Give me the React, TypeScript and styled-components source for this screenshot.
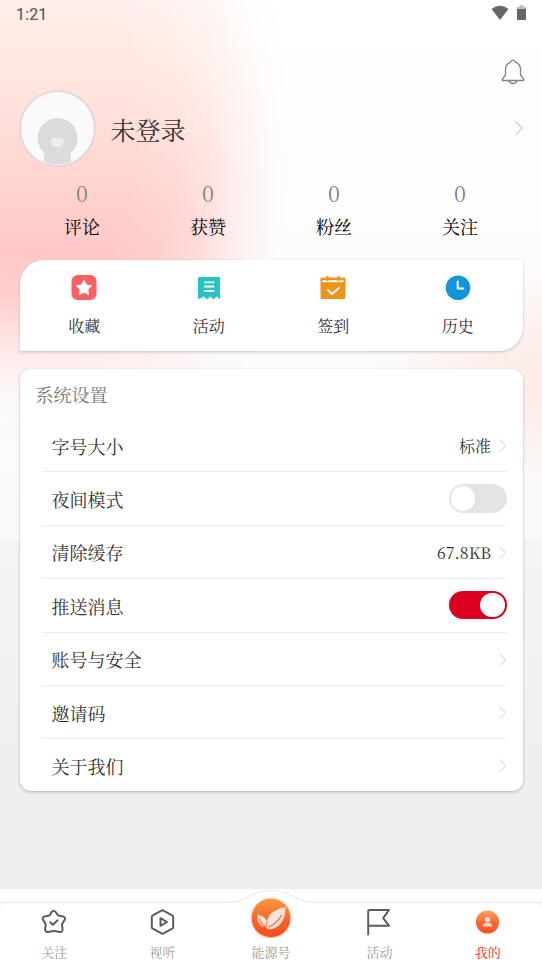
import React from 'react';
import styled, { createGlobalStyle } from 'styled-components';

const Global = createGlobalStyle`
  * { box-sizing: border-box; }
  body {
    margin: 0;
    font-family: "Noto Serif CJK SC", "Source Han Serif SC", "Liberation Serif", "Noto Sans CJK SC", serif;
    color: #333;
  }
  svg { display: block; flex: none; }
`;

const Screen = styled.div`
  position: relative;
  isolation: isolate;
  width: 542px;
  height: 963px;
  display: flex;
  flex-direction: column;
  overflow: hidden;
  background: linear-gradient(#f4f4f4 541px, #ededed 860px);
`;

const Backdrop = styled.div`
  position: absolute;
  z-index: -1;
  inset: 0 0 auto 0;
  height: 541px;
  background:
    radial-gradient(ellipse 190px 115px at 555px 378px, #fdebe6 0%, #fdebe6cc 35%, #fdece744 75%, #fdece700 100%),
    linear-gradient(#ffffff, #fcfcfc 280px, #fafafa);
`;

const Glow = styled.div`
  height: 440px;
  background: linear-gradient(
    #ffeeec 0, #ffebe4 45px, #ffe3dd 95px, #ffdad5 150px, #ffd0cc 205px, #ffc8c6 255px,
    #ffcfcd 295px, #ffdfdd 330px, #feecec 360px, #fcf8f8 400px, #fbfbfb00 440px
  );
  mask-image:
    radial-gradient(ellipse 310px 470px at -20px 130px, #000 0%, #000 50%, #000d 64%, #000a 74%, #0005 84%, #0002 92%, transparent 100%);
`;

const StatusBar = styled.header`
  height: 28px;
  padding: 0 16px;
  display: flex;
  align-items: center;
  justify-content: space-between;
  font: 400 16px Roboto, sans-serif;
  color: #5f5857;
  letter-spacing: 0.15px;
  -webkit-text-stroke: 0.2px;
`;

const StatusIcons = styled.div`
  display: flex;
  gap: 8px;
  margin-top: -2px;
`;

const BellRow = styled.div`
  height: 62px;
  padding: 31px 17px 0 0;
  display: flex;
  justify-content: flex-end;
`;

const Profile = styled.section`
  height: 77px;
  padding: 0 19.5px 0 19px;
  display: flex;
  align-items: center;
`;

const UserName = styled.h1`
  flex: 1;
  margin: 1px 0 0 14.5px;
  font-size: 25px;
  font-weight: 400;
  line-height: 36px;
`;

const Stats = styled.section`
  height: 93px;
  padding: 12px 19px 0 19px;
  display: grid;
  grid-template-columns: repeat(4, 1fr);
`;

const Stat = styled.div`
  display: flex;
  flex-direction: column;
  align-items: center;
  color: #000;
  font-size: 18px;
  line-height: 32px;
`;

const Count = styled.span`
  height: 28px;
  line-height: 28px;
  font-size: 22px;
  font-weight: 300;
  color: #817978;
  margin-bottom: 3px;
`;

const Shortcuts = styled.nav`
  height: 91px;
  margin: 0 19.5px 18px 19.5px;
  padding: 14px 2.5px 0 2.5px;
  display: grid;
  grid-template-columns: repeat(4, 1fr);
  background: #fff;
  border-radius: 24px 0 24px 0;
  box-shadow: 0 1px 3px #0003;
`;

const Shortcut = styled.div`
  display: flex;
  flex-direction: column;
  align-items: center;
  gap: 12px;
  font-size: 16px;
  line-height: 25px;
`;

const Settings = styled.section`
  height: 422px;
  margin: 0 19.5px;
  padding: 0 16px 0 22.5px;
  background: #fff;
  border-radius: 11px;
  box-shadow: 0 1px 3px #0004;
`;

const SettingsTitle = styled.h2`
  height: 50px;
  margin: 0 0 0 -6.5px;
  font-size: 18px;
  font-weight: 400;
  line-height: 51px;
  color: #777;
`;

const Row = styled.div`
  height: 53.4px;
  padding: 1px 0 0 9.5px;
  display: flex;
  align-items: center;
  justify-content: space-between;
  font-size: 18px;
  border-bottom: 1.5px solid #ebebeb;
  &:last-child { border-bottom-color: transparent; }
`;

const Value = styled.span`
  display: flex;
  align-items: center;
  gap: 8px;
  font-size: 16px;
`;

const Toggle = styled.span<{ $on?: boolean }>`
  width: 58px;
  height: 28.5px;
  margin-top: -1.5px;
  padding: 2px;
  display: flex;
  align-items: center;
  justify-content: ${p => (p.$on ? 'flex-end' : 'flex-start')};
  border-radius: 15px;
  background: ${p => (p.$on ? '#db001d' : '#e4e4e4')};
  &::after {
    content: '';
    width: 24.5px;
    height: 24.5px;
    border-radius: 50%;
    background: #fff;
  }
`;

const TabBar = styled.nav`
  position: relative;
  height: 74px;
  margin-top: auto;
  display: grid;
  grid-template-columns: repeat(5, 1fr);
  background: #fff;
`;

const TabEdge = styled.svg`
  position: absolute;
  inset: 0 auto auto 0;
`;

const Tab = styled.div<{ $active?: boolean }>`
  position: relative;
  display: flex;
  flex-direction: column;
  align-items: center;
  font-size: 13px;
  line-height: 19px;
  color: ${p => (p.$active ? '#e51d1d' : '#9b9b9b')};
`;

const TabIcon = styled.div`
  height: 53px;
  padding-top: 13px;
  display: flex;
  align-items: center;
`;

const CenterIcon = styled(TabIcon)`
  padding-top: 4px;
`;

const Chevron = ({ size = 13.5, color = '#c4c4c4' }: { size?: number; color?: string }) => (
  <svg width={size * 0.55} height={size} viewBox="0 0 7.2 13" fill="none" stroke={color} strokeWidth=".8">
    <path d="M.5.5 6.600 6.500.5 12.500" />
  </svg>
);

const Avatar = () => (
  <svg width="77" height="77" viewBox="0 0 77 77">
    <defs><clipPath id="face"><circle cx="38.5" cy="38.5" r="36" /></clipPath></defs>
    <circle cx="38.5" cy="38.5" r="36.5" fill="#fafafa" />
    <circle cx="38.5" cy="38.5" r="37.4" fill="none" stroke="#ddd8d6" strokeWidth="1.5" />
    <g clipPath="url(#face)" fill="#dbdbdb">
      <circle cx="38.5" cy="48" r="20" />
      <path d="M27 62h23l2 4v11H25V66z" />
      <path d="M32 51q0-3 3-3h7q3 0 3 3-1 6-6.500 6T32 51" fill="#ededed" />
    </g>
  </svg>
);

const StarIcon = () => (
  <svg width="26" height="27" viewBox="0 0 26 27">
    <rect x=".5" y="1" width="25" height="25" rx="6" fill="#f96062" />
    <path d="m13 6.200 2.400 4.800 5.200.8-3.800 3.700.9 5.200-4.700-2.500-4.700 2.500.9-5.200-3.800-3.700 5.200-.8z" fill="#fff" stroke="#fff" strokeWidth="1" strokeLinejoin="round" />
  </svg>
);

const ReceiptIcon = () => (
  <svg width="24" height="27" viewBox="0 0 24 27">
    <path d="M2 3h20q1 0 1 1v21q-1.500 0-2.200-2-1-1-2 0-.8 2-2.300 2t-2.300-2q-1-1-2 0-.8 2-2.300 2t-2.300-2q-1-1-2 0Q2.500 25.500 1 25V4q0-1 1-1" fill="#27c3c2" />
    <path d="M8 8.300h8.500M8 12.500h8.500M8 17h8.500" stroke="#fff" strokeWidth="1.800" strokeLinecap="round" />
  </svg>
);

const CalendarIcon = () => (
  <svg width="26" height="27" viewBox="0 0 26 27">
    <rect x=".5" y="3.500" width="25" height="21.500" rx="1.300" fill="#eb961a" />
    <path d="M2.500 6.200h21v2h-21z" fill="#fff" />
    <path d="M7.500 2v5M18.500 2v5" stroke="#eb961a" strokeWidth="2.200" />
    <path d="m8 16 4 4 7-6" fill="none" stroke="#fff" strokeWidth="1.800" strokeLinecap="round" strokeLinejoin="round" />
  </svg>
);

const ClockIcon = () => (
  <svg width="26" height="27" viewBox="0 0 26 27">
    <circle cx="13" cy="13.700" r="12.300" fill="#1296db" />
    <path d="M12.700 7.500v7.100h5.500" fill="none" stroke="#fff" strokeWidth="2" strokeLinecap="round" strokeLinejoin="round" />
  </svg>
);

const LeafLogo = () => (
  <svg width="44" height="44" viewBox="0 0 44 44">
    <defs>
      <linearGradient id="leafBg" x1="0" y1="0" x2="0" y2="1">
        <stop stopColor="#fb973c" /><stop offset=".6" stopColor="#f9612a" /><stop offset="1" stopColor="#fa4d1d" />
      </linearGradient>
    </defs>
    <circle cx="22" cy="22" r="20.500" fill="#ffc8af" opacity=".7" />
    <circle cx="22" cy="22" r="19.300" fill="url(#leafBg)" />
    <path d="M8.500 18.500q6.500 1.500 9.300 6-.2 3.500-1.300 6.800Q7.500 30 8.500 18.500" fill="#fde2db" />
    <path d="M36.500 11Q18.500 15 18.400 25.500q.2 3.500-1.600 6 2 1.800 5 1.700Q36.500 30 36.500 11" fill="#fde2db" />
    <path d="M20 31Q29 26.500 32.500 19M10.500 23q2 6 6.500 8" fill="none" stroke="#f76532" strokeWidth="1.100" strokeLinecap="round" />
  </svg>
);

const MineIcon = () => (
  <svg width="26" height="26" viewBox="0 0 26 26">
    <defs>
      <linearGradient id="mineBg" x1="0" y1="0" x2="0" y2="1">
        <stop stopColor="#fda267" /><stop offset=".55" stopColor="#f96530" /><stop offset="1" stopColor="#fb4f1c" />
      </linearGradient>
    </defs>
    <circle cx="12.500" cy="13" r="11.600" fill="url(#mineBg)" />
    <circle cx="12.500" cy="10.600" r="2.600" fill="#fde1d9" />
    <path d="M8.100 17.500v-1.200q0-2.300 2.500-2.300h3.800q2.500 0 2.500 2.300v1.200z" fill="#fde1d9" />
  </svg>
);

const lineIcon = { fill: 'none', stroke: '#5c5c5c', strokeWidth: 2, strokeLinejoin: 'round', strokeLinecap: 'round' } as const;

const FollowIcon = () => (
  <svg width="26" height="26" viewBox="0 0 26 26" {...lineIcon}>
    <path d="M10.700 2.800q1.900-2.300 3.800 0l2 3q.4.600 1.100.7l4.500.9q2.800 1 1.600 3.400l-2.400 3.800q-.4.600-.3 1.200l.6 4.400q-.1 3.100-3 2.900l-5-1.100q-.8-.2-1.600 0l-5 1.100q-2.600.2-2.900-2.900l.6-4.400q.1-.6-.3-1.200L2 10.800Q.9 8.400 3.600 7.400l4.500-.9q.7-.1 1.100-.7z" />
    <path d="m9.300 13.200 2.600 2.600 4.700-4.600" />
  </svg>
);

const VideoIcon = () => (
  <svg width="26" height="26" viewBox="0 0 26 26" {...lineIcon}>
    <path d="M11.500 1.600q1-.6 2 0l8.700 4.700q1 .6 1 1.700v10q0 1.100-1 1.700l-8.700 4.700q-1 .6-2 0l-8.700-4.700q-1-.6-1-1.700V8q0-1.100 1-1.700z" />
    <path d="M10.500 9.200v7.600l6.500-3.800z" />
  </svg>
);

const FlagIcon = () => (
  <svg width="26" height="28" viewBox="0 0 26 28" {...lineIcon}>
    <path d="M2.200 26.500V3q0-1 1-1h19.800l-5.800 8.200 5.800 7.500H3" />
  </svg>
);

const stats = ['评论', '获赞', '粉丝', '关注'];
const shortcuts = [
  { label: '收藏', icon: <StarIcon /> },
  { label: '活动', icon: <ReceiptIcon /> },
  { label: '签到', icon: <CalendarIcon /> },
  { label: '历史', icon: <ClockIcon /> },
];
const settings = [
  { label: '字号大小', control: <Value>标准<Chevron /></Value> },
  { label: '夜间模式', control: <Toggle /> },
  { label: '清除缓存', control: <Value>67.8KB<Chevron /></Value> },
  { label: '推送消息', control: <Toggle $on /> },
  { label: '账号与安全', control: <Chevron /> },
  { label: '邀请码', control: <Chevron /> },
  { label: '关于我们', control: <Chevron /> },
];

export default function App() {
  return (
    <>
      <Global />
      <Screen>
        <Backdrop><Glow /></Backdrop>
        <StatusBar>
          <span>1:21</span>
          <StatusIcons>
            <svg width="18" height="16" viewBox="0 0 18 16"><path d="M.5 4Q9-2.500 17.500 4L9 15z" fill="#666" /></svg>
            <svg width="9" height="16" viewBox="0 0 9 16">
              <path d="M0 2h2.500V0h4v2H9v3H0z" fill="#bdbdbd" /><path d="M0 4h9v10.500q0 .5-.5.500h-8Q0 15 0 14.500z" fill="#666" />
            </svg>
          </StatusIcons>
        </StatusBar>
        <BellRow>
          <svg width="24" height="26" viewBox="0 0 24 26" fill="none" stroke="#858585" strokeWidth="1.300" strokeLinejoin="round">
            <path d="M9.800 3.200Q10 1.200 12 1.200t2.200 2q5.300 2 5.300 7.300v5.500l3.300 4.500q.4 1-.6 1H1.800q-1 0-.6-1L4.500 16v-5.500q0-5.300 5.300-7.300M7.800 21.500q1 3 4.200 3t4.200-3" />
          </svg>
        </BellRow>
        <Profile>
          <Avatar />
          <UserName>未登录</UserName>
          <Chevron size={14.5} color="#aaa" />
        </Profile>
        <Stats>
          {stats.map(label => <Stat key={label}><Count>0</Count>{label}</Stat>)}
        </Stats>
        <Shortcuts>
          {shortcuts.map(s => <Shortcut key={s.label}>{s.icon}{s.label}</Shortcut>)}
        </Shortcuts>
        <Settings>
          <SettingsTitle>系统设置</SettingsTitle>
          <div>
            {settings.map(s => <Row key={s.label}><span>{s.label}</span>{s.control}</Row>)}
          </div>
        </Settings>
        <TabBar>
          <TabEdge width="542" height="20" viewBox="0 0 542 20" fill="none" stroke="#e9e9e9">
            <path d="M1.500 17v-3.500H228q11 0 20-5.500 11-6.500 23.500-6.500T295 8q9 5.500 20 5.500h226V17" />
          </TabEdge>
          <Tab><TabIcon><FollowIcon /></TabIcon>关注</Tab>
          <Tab><TabIcon><VideoIcon /></TabIcon>视听</Tab>
          <Tab><CenterIcon><LeafLogo /></CenterIcon>能源号</Tab>
          <Tab><TabIcon><FlagIcon /></TabIcon>活动</Tab>
          <Tab $active><TabIcon><MineIcon /></TabIcon>我的</Tab>
        </TabBar>
      </Screen>
    </>
  );
}
